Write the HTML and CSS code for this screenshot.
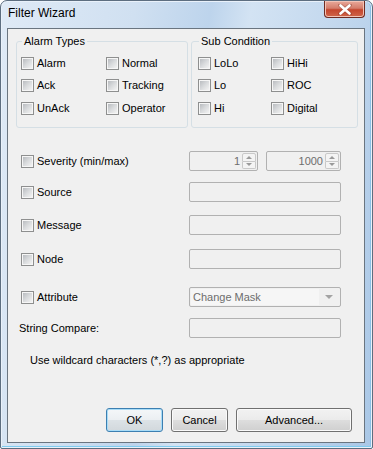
FILE: index.html
```html
<!DOCTYPE html>
<html lang="en">
<head>
  <meta charset="UTF-8" />
  <title>Filter Wizard</title>
  <link rel="stylesheet" href="styles.css">
</head>
<body>
  <div class="window">
    <div class="titlebar">
      <span class="title">Filter Wizard</span>
      <button class="close-btn" aria-label="Close">
        <svg width="14" height="11" viewBox="0 0 14 11">
          <path d="M2 1 L12 10 M12 1 L2 10" stroke="#7a2c20" stroke-width="4" stroke-linecap="round" opacity="0.35" />
          <path d="M2.5 1.5 L11.5 9.5 M11.5 1.5 L2.5 9.5" stroke="#fff" stroke-width="2.6" stroke-linecap="round" />
        </svg>
      </button>
    </div>

    <div class="client">
      <div class="groups">
        <fieldset class="group alarm-types">
          <legend>Alarm Types</legend>
          <div class="checks">
            <label class="chk"><span class="box"></span>Alarm</label>
            <label class="chk"><span class="box"></span>Normal</label>
            <label class="chk"><span class="box"></span>Ack</label>
            <label class="chk"><span class="box"></span>Tracking</label>
            <label class="chk"><span class="box"></span>UnAck</label>
            <label class="chk"><span class="box"></span>Operator</label>
          </div>
        </fieldset>
        <fieldset class="group sub-condition">
          <legend>Sub Condition</legend>
          <div class="checks">
            <label class="chk"><span class="box"></span>LoLo</label>
            <label class="chk"><span class="box"></span>HiHi</label>
            <label class="chk"><span class="box"></span>Lo</label>
            <label class="chk"><span class="box"></span>ROC</label>
            <label class="chk"><span class="box"></span>Hi</label>
            <label class="chk"><span class="box"></span>Digital</label>
          </div>
        </fieldset>
      </div>

      <div class="filters">
        <div class="row row-severity">
          <label class="chk field-label"><span class="box"></span>Severity (min/max)</label>
          <div class="spinners">
            <div class="spinner spin-min">
              <span class="spin-value">1</span>
              <span class="spin-btns"><span class="up"></span><span class="down"></span></span>
            </div>
            <div class="spinner spin-max">
              <span class="spin-value">1000</span>
              <span class="spin-btns"><span class="up"></span><span class="down"></span></span>
            </div>
          </div>
        </div>
        <div class="row row-source">
          <label class="chk field-label"><span class="box"></span>Source</label>
          <div class="textbox"></div>
        </div>
        <div class="row row-message">
          <label class="chk field-label"><span class="box"></span>Message</label>
          <div class="textbox"></div>
        </div>
        <div class="row row-node">
          <label class="chk field-label"><span class="box"></span>Node</label>
          <div class="textbox"></div>
        </div>
        <div class="row row-attribute">
          <label class="chk field-label"><span class="box"></span>Attribute</label>
          <div class="combo">
            <span class="combo-text">Change Mask</span>
            <span class="combo-arrow"></span>
          </div>
        </div>
        <div class="row row-string">
          <span class="field-label plain-label">String Compare:</span>
          <div class="textbox"></div>
        </div>
      </div>

      <p class="hint">Use wildcard characters (*,?) as appropriate</p>

      <div class="buttons">
        <button class="btn btn-default">OK</button>
        <button class="btn">Cancel</button>
        <button class="btn btn-wide">Advanced...</button>
      </div>
    </div>
  </div>
</body>
</html>
```

FILE: styles.css
```css
body {
  margin: 0;
  padding: 0;
  font-family: 'Liberation Sans', Arial, sans-serif;
  font-size: 11px;
  color: #000;
  background: #fff;
}
.window {
  width: 373px;
  height: 449px;
  box-sizing: border-box;
  border: 1px solid #5d6e80;
  border-radius: 7px 7px 2px 2px;
  padding: 0 7px 5px 6px;
  display: flex;
  flex-direction: column;
  background: linear-gradient(100deg, #dfeaf6 0%, #d0e0f1 30%, #bdd4ec 47%, #d3e3f3 56%, #c3d8ee 75%, #a9c7e6 100%);
  box-shadow: inset 0 0 0 1px #e9f1fa, inset 0 -2px 0 #7fcbef, inset -2px 0 0 #8cbfe6;
}
/* barre de titre */
.titlebar {
  height: 27px;
  flex-shrink: 0;
  display: flex;
  justify-content: space-between;
  align-items: flex-start;
}
.title {
  font-size: 12px;
  line-height: 15px;
  margin-top: 5px;
  margin-left: 1px;
  color: #000;
}
.close-btn {
  width: 41px;
  height: 17px;
  margin: 0;
  padding: 0;
  border: 1px solid #6e2b22;
  border-top: none;
  border-radius: 0 0 4px 4px;
  background: linear-gradient(#e9a99b 0%, #d47d6b 45%, #c4452d 55%, #d0664a 100%);
  box-shadow: inset 0 0 0 1px #f2c3b6;
  display: flex;
  justify-content: center;
  align-items: center;
}
/* zone cliente */
.client {
  flex: 1;
  background: #f0f0f0;
  border: 1px solid #6a7580;
  display: flex;
  flex-direction: column;
}
.groups {
  display: flex;
  gap: 3px;
  margin-top: 6px;
  padding-left: 8px;
}
.group {
  margin: 0;
  height: 93px;
  box-sizing: border-box;
  border: 1px solid #d5dfe5;
  border-radius: 3px;
  padding: 5px 0 0 4px;
  min-width: 0;
}
.group legend {
  line-height: 12px;
  padding: 0 2px;
  margin-left: 1px;
}
.alarm-types {
  width: 172px;
}
.sub-condition {
  width: 167px;
  padding-left: 6px;
}
.checks {
  display: grid;
  grid-template-columns: 85px auto;
  grid-auto-rows: 22.5px;
}
.sub-condition .checks {
  grid-template-columns: 73px auto;
}
.chk {
  display: flex;
  align-items: center;
  gap: 3px;
  line-height: 13px;
  white-space: nowrap;
}
.box {
  width: 13px;
  height: 13px;
  box-sizing: border-box;
  border: 1px solid #8e8f8f;
  background: #f6f6f6;
  padding: 1px;
  flex-shrink: 0;
}
.box::after {
  content: "";
  display: block;
  width: 9px;
  height: 9px;
  background: linear-gradient(135deg, #b9bcc0 0%, #d9dbdd 50%, #f3f3f3 100%);
}
/* lignes de filtre */
.filters {
  display: flex;
  flex-direction: column;
  padding-left: 13px;
}
.row {
  display: flex;
  align-items: center;
  height: 20px;
}
.row-severity { margin-top: 23px; }
.row-source { margin-top: 11px; }
.row-message { margin-top: 13px; }
.row-node { margin-top: 14px; }
.row-attribute { margin-top: 18px; }
.row-string { margin-top: 11px; }
.field-label {
  width: 168px;
  flex-shrink: 0;
}
.plain-label {
  margin-left: -2px;
  margin-right: 2px;
}
.textbox, .combo, .spinner {
  box-sizing: border-box;
  height: 20px;
  border: 1px solid #b1b1b1;
  border-radius: 2px;
  background: #f0f0f0;
}
.textbox, .combo {
  width: 152px;
}
.spinners {
  display: flex;
  gap: 8px;
}
.spinner {
  display: flex;
  align-items: center;
  justify-content: flex-end;
  color: #6d6d6d;
  padding-right: 1px;
}
.spin-min { width: 69px; }
.spin-max { width: 75px; }
.spin-value {
  padding-right: 2px;
}
.spin-btns {
  width: 14px;
  height: 16px;
  display: flex;
  flex-direction: column;
}
.spin-btns span {
  flex: 1;
  border: 1px solid #c9c9c9;
  background: #f4f4f4;
  display: flex;
  justify-content: center;
  align-items: center;
}
.spin-btns .up { border-radius: 2px 2px 0 0; }
.spin-btns .down { border-radius: 0 0 2px 2px; border-top: none; }
.spin-btns .up::after,
.spin-btns .down::after {
  content: "";
  border-left: 3px solid transparent;
  border-right: 3px solid transparent;
}
.spin-btns .up::after { border-bottom: 3px solid #9a9a9a; }
.spin-btns .down::after { border-top: 3px solid #9a9a9a; }
.combo {
  display: flex;
  align-items: center;
  padding: 1px;
}
.combo-text {
  flex: 1;
  height: 16px;
  line-height: 16px;
  padding-left: 2px;
  color: #6d6d6d;
  background: #f6f6f6;
}
.combo-arrow {
  width: 20px;
  display: flex;
  justify-content: center;
}
.combo-arrow::after {
  content: "";
  border-left: 4px solid transparent;
  border-right: 4px solid transparent;
  border-top: 4px solid #a3a3a3;
}
.hint {
  margin: 16px 0 0 22px;
  line-height: 13px;
}
/* boutons */
.buttons {
  margin-top: auto;
  padding: 0 12px 10px 0;
  display: flex;
  justify-content: flex-end;
  gap: 8px;
}
.btn {
  width: 57px;
  height: 24px;
  padding: 0;
  font-family: inherit;
  font-size: 11px;
  color: #000;
  border: 1px solid #707070;
  border-radius: 3px;
  background: linear-gradient(#f2f2f2 0%, #ebebeb 48%, #dddddd 52%, #cfcfcf 100%);
  box-shadow: inset 0 0 0 1px #fafafa;
}
.btn-default {
  border-color: #3c7fb1;
  box-shadow: inset 0 0 0 1px #a9dcf7;
  background: linear-gradient(#f4f7f9 0%, #ebeff2 48%, #dce2e6 52%, #d2d8dc 100%);
}
.btn-wide {
  width: 116px;
}
```
